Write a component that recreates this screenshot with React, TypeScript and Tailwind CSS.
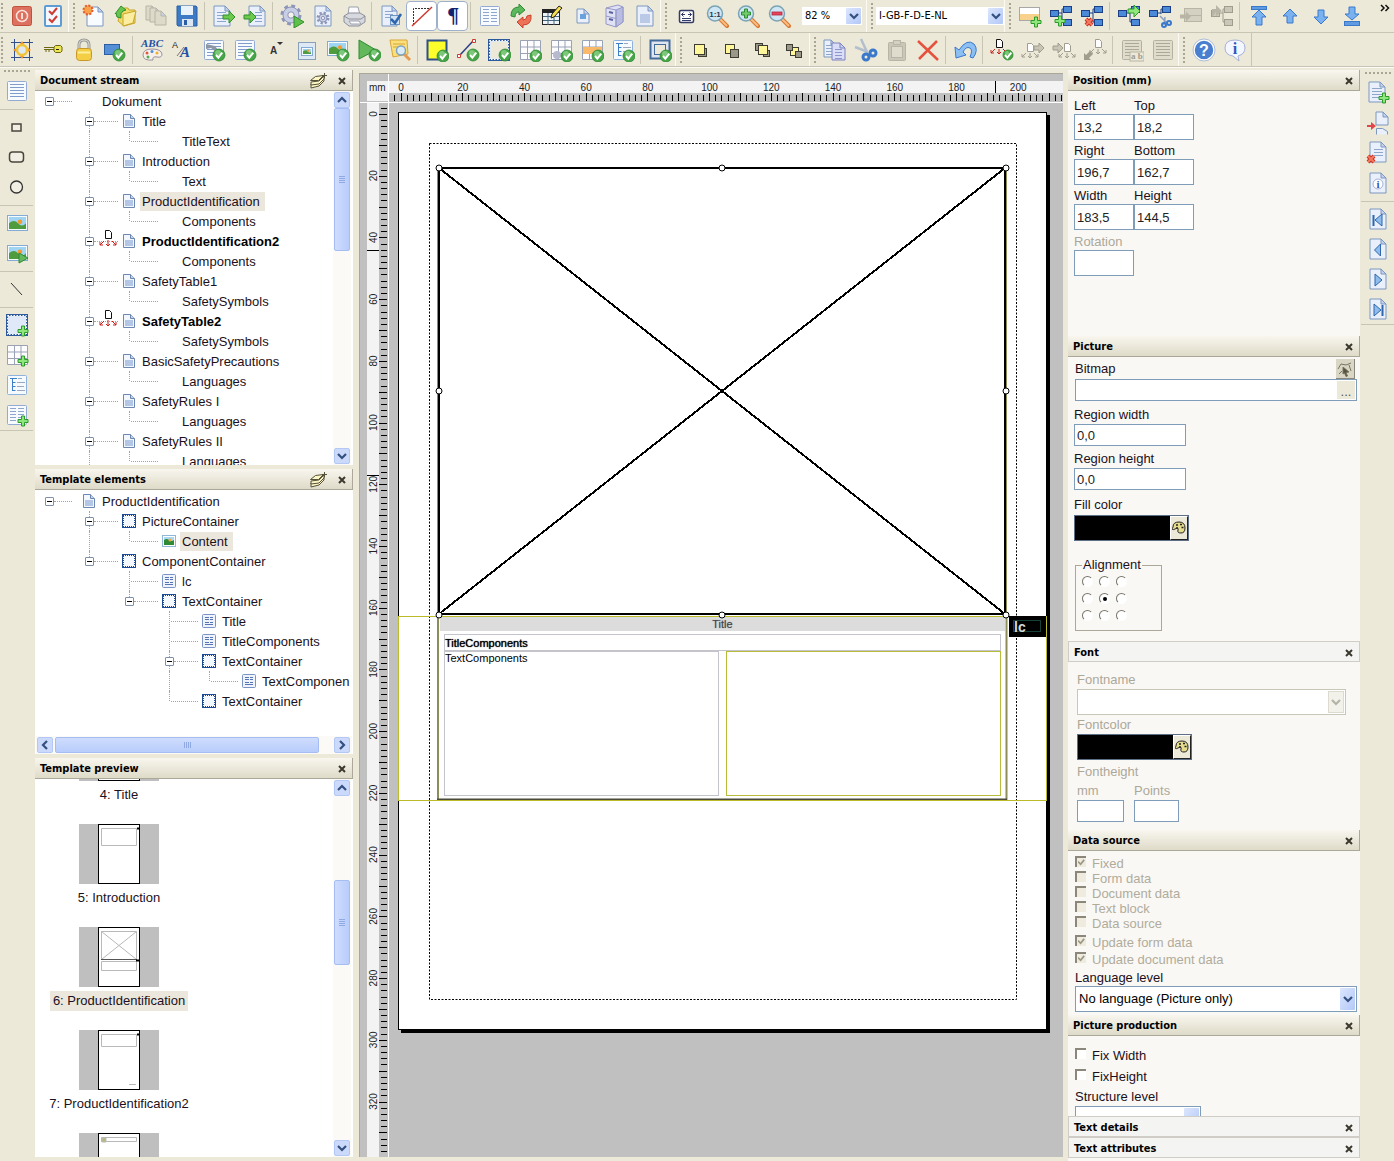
import React, { type ReactNode } from "react";

const UI = "font-['DejaVu_Sans_Condensed','Noto_Sans',sans-serif]";

/* ---------- icon building blocks ---------- */

const Pg = ({ x = 4, y = 2, w = 16, h = 20, fill = "#eaf0fb", stroke = "#7d97bf" }) => (
  <>
    <path d={`M${x} ${y}h${w - 5}l5 5v${h - 5}h${-w}z`} fill={fill} stroke={stroke} />
    <path d={`M${x + w - 5} ${y}v5h5z`} fill="#c3d3ee" stroke={stroke} />
  </>
);
const Lines = ({ x = 7, y = 9, w = 10, n = 4, c = "#8ea6cc", gap = 3 }) => (
  <>
    {Array.from({ length: n }, (_, i) => (
      <path key={i} d={`M${x} ${y + i * gap + 0.5}h${w}`} stroke={c} />
    ))}
  </>
);
const Chk = ({ x = 17, y = 17, r = 6 }) => (
  <>
    <circle cx={x} cy={y} r={r} fill="#46a546" stroke="#2f8a35" strokeWidth=".8" />
    <circle cx={x - 1} cy={y - 2} r={r - 3} fill="#7cc77a" />
    <path d={`M${x - 3} ${y}l2.300 2.600 4-5`} stroke="#fff" strokeWidth="2" fill="none" />
  </>
);
const Plus = ({ x = 18, y = 18 }) => (
  <path
    d={`M${x - 1.5} ${y - 5}h3v3.500h3.500v3h-3.500v3.500h-3v-3.500h-3.500v-3h3.500z`}
    fill="#8ee67c"
    stroke="#2a9a2a"
  />
);
const RedX = ({ x = 7, y = 18, s = 3 }) => (
  <>
    <path d={`M${x - s} ${y - s}l${2 * s} ${2 * s}m0 ${-2 * s}l${-2 * s} ${2 * s}`} stroke="#c9301c" strokeWidth="4" />
    <path d={`M${x - s} ${y - s}l${2 * s} ${2 * s}m0 ${-2 * s}l${-2 * s} ${2 * s}`} stroke="#f47a64" strokeWidth="2" />
  </>
);
const Arrow = ({ x = 12, y = 12, c = "#6cc94c", s = "#2f8f2b" }) => (
  <path d={`M${x} ${y - 2}h6v-4l6 6-6 6v-4h-6z`} fill={c} stroke={s} />
);
const Table = () => (
  <>
    <path d="M2.500 2.500h20v19h-20z" fill="#fdfdff" />
    <path d="M2.500 2.500h20v19h-20zM9.500 2.500v19M16 2.500v19M2.500 9h20M2.500 15.500h20" stroke="#9aa3b5" fill="none" />
  </>
);
const Photo = ({ x = 2, y = 4, w = 20, h = 15 }) => (
  <>
    <rect x={x + 0.5} y={y + 0.5} width={w} height={h} fill="#f6fbff" stroke="#83abd4" />
    <rect x={x + 2} y={y + 2} width={w - 3} height={h - 3} fill="#9fd4f2" />
    <path
      d={`M${x + 2} ${y + h * 0.55}q${w * 0.25} ${-h * 0.3} ${w * 0.45} 0t${w - 3 - w * 0.45} 0v${h * 0.45 - 1}h${-(w - 3)}z`}
      fill="#4f9c3e"
    />
    <circle cx={x + w * 0.65} cy={y + h * 0.45} r={h * 0.15} fill="#f59a2c" />
  </>
);
const Lens = ({ children }: { children?: ReactNode }) => (
  <>
    <path d="M15 15l7 7" stroke="#d9762e" strokeWidth="4" strokeLinecap="round" />
    <path d="M15.500 15.500l6 6" stroke="#f8bd85" strokeWidth="2" strokeLinecap="round" />
    <circle cx="10" cy="9.500" r="7.500" fill="#cfe6f4" stroke="#7aa3b5" strokeWidth="1.500" />
    {children}
  </>
);
const Gear = ({ x = 11, y = 10, r = 6 }) => (
  <>
    <circle cx={x} cy={y} r={r + 1} fill="none" stroke="#8d96b8" strokeWidth="3" strokeDasharray={`${(r + 1) * 0.42} ${(r + 1) * 0.365}`} />
    <circle cx={x} cy={y} r={r} fill="#c8cee6" stroke="#8d96b8" />
    <circle cx={x} cy={y} r={r * 0.4} fill="#f4f2ea" stroke="#8d96b8" />
  </>
);
const Box = ({ x = 0, y = 0, w = 8, h = 6, c = "#3f7fd0", s = "#1d3f86" }) => (
  <rect x={x + 0.5} y={y + 0.5} width={w} height={h} fill={c} stroke={s} />
);
const Nodes = ({ c = "#4a8ad8", s = "#1d3f86" }) => (
  <>
    <path d="M9 9h4M13 5v13M13 5h3M13 18h3" stroke={s} fill="none" />
    <Box x={1} y={6} c={c} s={s} />
    <Box x={14} y={2} c={c} s={s} />
    <Box x={14} y={15} c={c} s={s} />
  </>
);
const Fan = ({ x = 12, y = 2, c = "#111", a = "#c8201c" }) => (
  <>
    <path d={`M${x - 2.5} ${y + 0.5}h4l2 2v6h-6z`} fill="#fff" stroke={c} />
    <path
      d={`M${x - 4} ${y + 10}l-4 4m0-3v3h3M${x} ${y + 10}v5m-2-2l2 2 2-2M${x + 4} ${y + 10}l4 4m0-3v3h-3`}
      stroke={a}
      fill="none"
    />
  </>
);
const Sq = ({ x = 0, y = 0, s = 9, c = "#fff79a" }) => (
  <rect x={x + 0.5} y={y + 0.5} width={s} height={s} fill={c} stroke="#3c3c30" />
);
const Dashed = () => (
  <>
    <rect x="2" y="2" width="20" height="20" fill="#dfe9f8" stroke="#2c5a9c" strokeWidth="2" />
    <rect x="2.500" y="2.500" width="19" height="19" fill="none" stroke="#fff" strokeDasharray="1.500 1.500" />
  </>
);
const Sheet = ({ g = false }) => (
  <>
    <rect x="2.500" y="2.500" width="19" height="19" rx="1" fill={g ? "#e0dccc" : "#f7faff"} stroke={g ? "#b5b1a2" : "#93abd4"} />
    <Lines x={5} y={5} w={14} n={5} c={g ? "#aca899" : "#7f9ccb"} />
  </>
);
const TreeI = () => (
  <>
    <rect x="2.500" y="2.500" width="19" height="19" rx="1" fill="#f5faff" stroke="#8fb2dd" />
    <path d="M5 5.500h7M7.500 6v12M7.500 9.500h3M7.500 13.500h3M7.500 17.500h3" stroke="#3f7fc8" fill="none" />
    <path d="M12 9.500h8M12 13.500h7M12 17.500h8M13 5.500h4" stroke="#9aa7bd" />
  </>
);
const Columns = () => (
  <>
    <rect x="2.500" y="2.500" width="19" height="19" rx="1" fill="#f7faff" stroke="#93abd4" />
    <Lines x={5} y={5} w={6} n={5} />
    <Lines x={13} y={5} w={6} n={5} />
  </>
);

const G = "#b9b5a6";
const GS = "#a09c8e";

const icons: Record<string, ReactNode> = {
  Exit: (
    <>
      <rect x="2.500" y="2.500" width="19" height="19" rx="2" fill="#dd7160" stroke="#c2503e" />
      <circle cx="12" cy="12" r="5.500" fill="none" stroke="#fbe3dc" strokeWidth="1.500" />
      <path d="M12 9v6" stroke="#fff" strokeWidth="1.500" />
    </>
  ),
  Checklist: (
    <>
      <rect x="4" y="2" width="16" height="20" rx="1" fill="#f3f8ff" stroke="#5f9cd3" strokeWidth="2" />
      <path d="M8 7l3 3 5-6M8 15l3 3 5-6" stroke="#cf3a30" strokeWidth="2" fill="none" />
    </>
  ),
  New: (
    <>
      <Pg x={5} y={3} w={16} h={19} fill="#f8fbff" />
      <circle cx="6" cy="6" r="4.500" fill="#f7a24a" stroke="#e5572a" strokeDasharray="2 1.500" strokeWidth="2" />
    </>
  ),
  Open: (
    <>
      <path d="M8 7l3-3h4l1 2h6v13l-11 3-6-5z" fill="#f3dc6a" stroke="#c9a52b" />
      <path d="M10 10l13-3-3 12-10 3z" fill="#fbeea0" stroke="#c9a52b" />
      <path d="M2 10l6-8 5 4-3 1q-3 2-2 7l-4-1-1-4z" fill="#66c54e" stroke="#2f8f2b" />
    </>
  ),
  Pages: (
    <>
      <Pg x={2} y={2} w={11} h={14} fill="#dedaca" stroke={G} />
      <Pg x={6} y={4} w={11} h={14} fill="#dedaca" stroke={G} />
      <Pg x={11} y={7} w={11} h={14} fill="#dedaca" stroke={G} />
    </>
  ),
  Save: (
    <>
      <path d="M2 2h19l1 1v19H3l-1-1z" fill="#3d7ac6" stroke="#2b5ea5" />
      <rect x="6" y="2" width="12" height="9" fill="#e9f1fb" />
      <rect x="7" y="15" width="11" height="7" fill="#dce6f3" />
      <rect x="9" y="16" width="3" height="5" fill="#2b5ea5" />
    </>
  ),
  Export: (
    <>
      <Pg x={2} y={2} w={16} h={20} />
      <Lines x={5} y={8} w={9} n={4} />
      <Arrow x={11} y={13} />
    </>
  ),
  Import: (
    <>
      <Pg x={6} y={2} w={16} h={20} />
      <Lines x={12} y={8} w={7} n={4} />
      <Arrow x={1} y={13} />
    </>
  ),
  Process: (
    <>
      <Gear x={11} y={11} r={8} />
      <path d="M14 12l10 6-10 6z" fill="#5fc04c" stroke="#2f8f2b" />
    </>
  ),
  "Document settings": (
    <>
      <Pg x={4} y={2} w={16} h={20} />
      <Gear x={12} y={14} r={4} />
    </>
  ),
  Print: (
    <>
      <path d="M7 3h9l2 8H6z" fill="#fbfbfd" stroke="#9aa0ac" />
      <path d="M2 12l5-3h11l5 3v6l-6 4H7l-5-4z" fill="#d8d9de" stroke="#8d9098" />
      <path d="M2 12l5 3h12l4-3" stroke="#8d9098" fill="none" />
      <path d="M7 17h10l2 3H9z" fill="#fff" stroke="#9aa0ac" />
    </>
  ),
  "Check document": (
    <>
      <Pg x={3} y={2} w={15} h={20} />
      <Lines x={6} y={7} w={8} n={3} />
      <rect x="11.500" y="11.500" width="9" height="9" fill="#d3e3f5" stroke="#6d93c2" />
      <path d="M12 15l4 4 6-9" stroke="#2e66ac" strokeWidth="2.500" fill="none" />
    </>
  ),
  Guides: (
    <>
      <path d="M3.500 21V4.500H20" stroke="#333" strokeDasharray="2 1" fill="none" />
      <path d="M2 22L22 3" stroke="#cf3a30" strokeWidth="1.500" />
    </>
  ),
  "Control characters": (
    <text x="12" y="19" textAnchor="middle" fontFamily="DejaVu Serif, serif" fontWeight="bold" fontSize="20" fill="#15236e">
      ¶
    </text>
  ),
  "List view": <Columns />,
  Refresh: (
    <>
      <path d="M2 12q0-9 8-9V0l6 6-6 5V8q-4 0-4 5z" fill="#5cb85c" stroke="#2f8a35" />
      <path d="M22 11q1 10-8 10v3l-6-6 6-5v3q4 0 4-4z" fill="#ee7257" stroke="#c9402b" />
    </>
  ),
  "Edit table": (
    <>
      <rect x="2.500" y="5.500" width="17" height="15" fill="#eef3f8" stroke="#222" />
      <path d="M2 7.500h18" stroke="#222" strokeWidth="3" />
      <path d="M8 9v12M14 9v12M3 12.500h16M3 16.500h16" stroke="#47687c" />
      <path d="M11 14l1-4 7-8 3 2-8 9z" fill="#f8df4e" stroke="#222" />
    </>
  ),
  "Small document": (
    <>
      <Pg x={6} y={5} w={12} h={14} />
      <rect x="9" y="10" width="6" height="5" fill="#6aa2de" />
    </>
  ),
  Archive: (
    <>
      <path d="M4 4l12-3 5 2v15l-7 5-10-3z" fill="#e0e1f4" stroke="#9599c8" />
      <path d="M14 6l7-3v15l-7 5z" fill="#b9bce0" stroke="#9599c8" />
      <path d="M4 4l10 2v17M4 12l10 2.500" stroke="#9599c8" fill="none" />
      <path d="M7 8l4 1M7 15l4 1" stroke="#5b60a0" strokeWidth="2" />
    </>
  ),
  Document: (
    <>
      <Pg x={4} y={2} w={16} h={20} />
      <rect x="7" y="10" width="10" height="9" fill="#b9c9e6" />
    </>
  ),
  "Fit width": (
    <>
      <rect x="5.500" y="6.500" width="14" height="12" rx="1.500" fill="#fff" stroke="#333a66" strokeWidth="1.500" />
      <path d="M11 10.500H7.500l2-2m-2 2l2 2M14 10.500h3.500l-2-2m2 2l-2 2M8 14.500h9M8 16.500h9" stroke="#333a66" fill="none" />
    </>
  ),
  "Actual size": (
    <Lens>
      <text x="10" y="12.500" textAnchor="middle" fontFamily="Liberation Sans, sans-serif" fontWeight="bold" fontSize="8" fill="#1b3c55">
        1:1
      </text>
    </Lens>
  ),
  "Zoom in": (
    <Lens>
      <path d="M8.500 5h3v3h3v3h-3v3h-3v-3h-3V8h3z" fill="#6fca6a" stroke="#2f8a35" />
    </Lens>
  ),
  "Zoom out": (
    <Lens>
      <rect x="5" y="8" width="10" height="3" fill="#e5455c" stroke="#b5283c" strokeWidth=".8" />
    </Lens>
  ),
  "Add row": (
    <>
      <rect x="1.500" y="3.500" width="20" height="13" fill="#fff" stroke="#a8a8a8" />
      <rect x="2" y="10" width="19" height="6" fill="#f8d28c" />
      <Plus x={18} y={18} />
    </>
  ),
  "Add node": (
    <>
      <Nodes />
      <Plus x={11} y={17} />
    </>
  ),
  "Delete node": (
    <>
      <Nodes />
      <RedX x={9} y={18} />
    </>
  ),
  "Expand node": (
    <>
      <Nodes />
      <Arrow x={11} y={7} c="#8ee67c" s="#2a9a2a" />
    </>
  ),
  "Cut node": (
    <>
      <path d="M9 9h4M13 5h3M13 5v5" stroke="#1d3f86" fill="none" />
      <Box x={1} y={6} c="#4a8ad8" />
      <Box x={14} y={2} c="#4a8ad8" />
      <path d="M12 12l8 8M17 13l-1 8" stroke="#8a9bbd" strokeWidth="1.500" />
      <circle cx="16" cy="21" r="2" fill="none" stroke="#3a78cc" strokeWidth="2" />
      <circle cx="21" cy="19" r="2" fill="none" stroke="#3a78cc" strokeWidth="2" />
    </>
  ),
  "Insert row": (
    <>
      <rect x="5.500" y="4.500" width="17" height="13" fill="#d5d1c2" stroke={G} />
      <path d="M6 11.500h16" stroke={G} />
      <path d="M1 10.500h6v-3l5 5-5 5v-3H1z" fill={G} />
    </>
  ),
  "Insert node": (
    <>
      <Nodes c="#cbc7b8" s={GS} />
      <path d="M2 13V5h4V1l6 6-6 5V8" fill={G} />
    </>
  ),
  "Move to top": (
    <>
      <rect x="4.500" y="2.500" width="15" height="3" fill="#5e9be0" stroke="#3a78cc" />
      <path d="M12 6l7 7h-4v8H9v-8H5z" fill="#79b2ee" stroke="#3a78cc" />
    </>
  ),
  "Move up": <path d="M12 5l7 7h-4v7H9v-7H5z" fill="#79b2ee" stroke="#3a78cc" />,
  "Move down": <path d="M12 20l-7-7h4V6h6v7h4z" fill="#79b2ee" stroke="#3a78cc" />,
  "Move to bottom": (
    <>
      <path d="M12 16L5 10h4V3h6v7h4z" fill="#79b2ee" stroke="#3a78cc" />
      <rect x="4.500" y="17.500" width="15" height="4" fill="#5e9be0" stroke="#3a78cc" />
    </>
  ),
  "Anchor frame": (
    <>
      <path d="M4.500 1v22M19.500 1v22M1 4.500h22M1 19.500h22" stroke="#33508f" />
      <circle cx="12" cy="12" r="5" fill="#dfe7ef" stroke="#f0c236" strokeWidth="2.500" />
      <path d="M12 3l2 3h-4zM12 21l2-3h-4zM3 12l3-2v4zM21 12l-3-2v4z" fill="#f39a2c" />
    </>
  ),
  Key: (
    <>
      <path d="M3 9.500h11M3 11.500h11M5 12v2M8 12v2" stroke="#6c6512" />
      <path d="M14.500 7.500h5l1.500 1.500v4l-1.500 1.500h-5L13 13V9z" fill="#ece452" stroke="#6c6512" />
      <path d="M15 11.500h3" stroke="#222" />
    </>
  ),
  Lock: (
    <>
      <path d="M7 11V7q0-5 5-5t5 5v4" fill="none" stroke="#9b9b96" strokeWidth="3" />
      <path d="M7 11V7q0-5 5-5t5 5v4" fill="none" stroke="#dcdcd8" />
      <rect x="4.500" y="10.500" width="15" height="12" rx="3" fill="#f4cf45" stroke="#c8982a" />
      <path d="M6 14.500h12" stroke="#fcefa0" strokeWidth="2" />
    </>
  ),
  "Accept shape": (
    <>
      <rect x="1.500" y="6.500" width="15" height="10" fill="#5590d6" stroke="#2b5ea5" />
      <Chk x={16} y={17} />
    </>
  ),
  "Spelling colours": (
    <>
      <text x="12" y="9" textAnchor="middle" fontFamily="Liberation Serif, serif" fontWeight="bold" fontStyle="italic" fontSize="11" fill="#2350a5">
        ABC
      </text>
      <path d="M3 17q0-6 9-6t10 5q0 4-5 3t-4 3q-10 1-10-5z" fill="#f7f0ea" stroke="#9a8f9f" />
      <circle cx="7" cy="15" r="1.500" fill="#e05a3c" />
      <circle cx="12" cy="13.500" r="1.500" fill="#4e8edc" />
      <circle cx="17" cy="15" r="1.500" fill="#f0b030" />
      <circle cx="8" cy="19" r="1.500" fill="#4fae4f" />
    </>
  ),
  "Font style": (
    <>
      <text x="1" y="10" fontFamily="Liberation Sans, sans-serif" fontSize="9" fill="#222">
        A
      </text>
      <path d="M6 18L13 9" stroke="#777" />
      <text x="9" y="19" fontFamily="Liberation Serif, serif" fontStyle="italic" fontWeight="bold" fontSize="15" fill="#2350a5">
        A
      </text>
    </>
  ),
  "Accept edit": (
    <>
      <Sheet />
      <path d="M4 6l9 2 4 5-3 1-5-4-5 1z" fill="#8c96a5" />
      <Chk x={17} y={17} />
    </>
  ),
  "Accept text": (
    <>
      <Sheet />
      <Chk x={17} y={17} />
    </>
  ),
  "Shrink font": (
    <>
      <text x="6" y="16" fontFamily="Liberation Sans, sans-serif" fontWeight="bold" fontSize="10" fill="#333">
        A
      </text>
      <path d="M13 4h6l-3 3z" fill="#333" />
    </>
  ),
  "Picture frame": (
    <>
      <rect x="3.500" y="4.500" width="17" height="17" fill="#dfe9f6" stroke="#8aa0b8" />
      <Photo x={6} y={9} w={11} h={8} />
    </>
  ),
  "Accept picture": (
    <>
      <Photo x={1} y={3} w={20} h={14} />
      <Chk x={17} y={17} />
    </>
  ),
  "Accept run": (
    <>
      <path d="M2 2l17 10L2 21z" fill="#62b85b" stroke="#2f8a35" />
      <Chk x={18} y={17} />
    </>
  ),
  "Search note": (
    <>
      <path d="M2 2h17l1 14-15 3z" fill="#fbdf7a" stroke="#d9a53a" />
      <path d="M5 6h12M5 9h6" stroke="#d9a53a" />
      <path d="M16 16l6 6" stroke="#e59a52" strokeWidth="3" />
      <circle cx="13" cy="12.500" r="4.500" fill="#dcecf7" stroke="#7aa3c5" strokeWidth="1.500" />
    </>
  ),
  "Accept fill": (
    <>
      <rect x="2.500" y="2.500" width="19" height="19" fill="#fdfd2c" stroke="#2c4f86" strokeWidth="2" />
      <Chk x={18} y={18} />
    </>
  ),
  "Accept line": (
    <>
      <path d="M4 17L17 3" stroke="#2c3f86" strokeWidth="1.500" />
      <path d="M1.500 16.500h3v3h-3zM16.500 1.500h3v3h-3z" fill="#fff" stroke="#cf3a30" />
      <Chk x={17} y={17} />
    </>
  ),
  "Accept container": (
    <>
      <Dashed />
      <rect x="4" y="4" width="16" height="16" fill="#ece9d8" />
      <Chk x={18} y={17} />
    </>
  ),
  "Accept table": (
    <>
      <Table />
      <Chk x={18} y={18} />
    </>
  ),
  "Accept cell": (
    <>
      <Table />
      <circle cx="8" cy="17" r="4" fill="#b7b9cf" />
      <Chk x={18} y={18} />
    </>
  ),
  "Accept row": (
    <>
      <Table />
      <rect x="3" y="9" width="19" height="7" fill="#f9b968" />
      <Chk x={18} y={18} />
    </>
  ),
  "Accept structure": (
    <>
      <TreeI />
      <Chk x={18} y={18} />
    </>
  ),
  "Accept border": (
    <>
      <rect x="2.500" y="2.500" width="19" height="18" fill="#dfe5ee" stroke="#456a9c" strokeWidth="2" />
      <rect x="6.500" y="6.500" width="11" height="10" fill="#ece9d8" stroke="#456a9c" />
      <Chk x={18} y={18} />
    </>
  ),
  "Bring to front": (
    <>
      <Sq x={9} y={10} s={8} c="#9b988a" />
      <Sq x={5} y={6} s={10} />
    </>
  ),
  "Send to back": (
    <>
      <Sq x={5} y={6} />
      <Sq x={10} y={11} s={8} c="#9b988a" />
    </>
  ),
  "Bring forward": (
    <>
      <Sq x={4} y={5} s={7} c="#9b988a" />
      <Sq x={12} y={12} s={6} c="#9b988a" />
      <Sq x={7} y={7} s={9} />
    </>
  ),
  "Send backward": (
    <>
      <Sq x={8} y={9} s={8} />
      <Sq x={4} y={6} s={6} c="#9b988a" />
      <Sq x={13} y={13} s={6} c="#9b988a" />
    </>
  ),
  Copy: (
    <>
      <Pg x={1} y={2} w={12} h={17} />
      <Lines x={3} y={7} w={7} n={4} />
      <Pg x={9} y={5} w={13} h={17} fill="#d9ddf6" stroke="#7c82c0" />
      <Lines x={12} y={11} w={7} n={4} c="#8e94cc" />
    </>
  ),
  Cut: (
    <>
      <path d="M7 1l6 13M1 9l13 5" stroke="#b4bfce" strokeWidth="2.500" />
      <circle cx="12" cy="19" r="3" fill="none" stroke="#3a78cc" strokeWidth="3" />
      <circle cx="19" cy="15" r="3" fill="none" stroke="#3a78cc" strokeWidth="3" />
    </>
  ),
  Paste: (
    <>
      <rect x="3.500" y="4.500" width="17" height="18" rx="1" fill="#cbc7b8" stroke={G} />
      <rect x="6.500" y="8.500" width="11" height="11" fill="#dfdccd" stroke={G} />
      <rect x="8.500" y="2.500" width="7" height="4" fill="#d5d1c2" stroke={G} />
    </>
  ),
  Delete: <path d="M2 3l20 19M21 3L3 21" stroke="#e5533f" strokeWidth="2.500" fill="none" />,
  Undo: (
    <path
      d="M2 9l1 11 10-3-3-3q3-6 7-4 3 2 0 9l3 1q6-8 1-14-7-6-15 6z"
      fill="#8cc0f2"
      stroke="#3a78cc"
      strokeLinejoin="round"
    />
  ),
  "Accept page flow": (
    <>
      <Fan x={9} y={1} />
      <Chk x={18} y={17} r={5} />
    </>
  ),
  "Flow next": (
    <>
      <Fan x={9} y={5} c={GS} a={GS} />
      <path d="M13 8h5V5l5 5-5 5v-3h-5z" fill="#c9c5b6" stroke={GS} />
    </>
  ),
  "Flow insert": (
    <>
      <Fan x={15} y={5} c={GS} a={GS} />
      <path d="M1 8h5V5l5 5-5 5v-3H1z" fill="#c9c5b6" stroke={GS} />
    </>
  ),
  "Flow back": (
    <>
      <Fan x={15} y={1} c={GS} a={GS} />
      <path d="M1 22v-7l2 2 4-4 3 3-4 4 2 2z" fill={GS} />
    </>
  ),
  "Text case": (
    <>
      <Sheet g />
      <rect x="10" y="14" width="14" height="9" fill="#ece9d8" stroke={G} />
      <text x="11" y="21" fontFamily="Liberation Serif, serif" fontWeight="bold" fontSize="9" fill={GS}>
        a b
      </text>
    </>
  ),
  "Text block": <Sheet g />,
  Help: (
    <>
      <circle cx="12" cy="12" r="10" fill="#4a7fcf" stroke="#fff" strokeWidth="1.500" />
      <circle cx="12" cy="12" r="11" fill="none" stroke="#8fa8d6" strokeWidth=".7" />
      <text x="12" y="18" textAnchor="middle" fontFamily="Liberation Sans, sans-serif" fontWeight="bold" fontSize="16" fill="#fff">
        ?
      </text>
    </>
  ),
  About: (
    <>
      <path d="M12 2q10 0 10 8 0 6-7 8l1 5-6-5Q2 17 2 10q0-8 10-8z" fill="#f4f7ff" stroke="#a4b1d9" />
      <text x="12" y="16" textAnchor="middle" fontFamily="Liberation Serif, serif" fontWeight="bold" fontSize="16" fill="#3057c0">
        i
      </text>
    </>
  ),
  "Text element": <Sheet />,
  Rectangle: <rect x="7" y="9" width="9" height="7" fill="#f1efe4" stroke="#4a463c" strokeWidth="1.500" />,
  "Rounded rectangle": <rect x="4.500" y="7" width="14" height="10" rx="3" fill="#f1efe4" stroke="#4a463c" strokeWidth="1.500" />,
  Ellipse: <circle cx="11.500" cy="12" r="6" fill="#f1efe4" stroke="#333" strokeWidth="1.300" />,
  Picture: <Photo />,
  "Picture run": (
    <>
      <Photo />
      <path d="M14 12l9 5-9 5z" fill="#62b85b" stroke="#2f8a35" />
    </>
  ),
  Line: <path d="M6 6l11 12" stroke="#333" />,
  "Add container": (
    <>
      <Dashed />
      <Plus />
    </>
  ),
  "Add table": (
    <>
      <Table />
      <Plus />
    </>
  ),
  Structure: <TreeI />,
  "Add columns": (
    <>
      <Columns />
      <Plus />
    </>
  ),
  "Add page": (
    <>
      <Pg x={3} y={1} w={16} h={20} />
      <Lines x={6} y={7} w={10} n={4} />
      <Plus x={18} y={17} />
    </>
  ),
  "Insert page break": (
    <>
      <Pg x={10} y={1} w={12} h={13} />
      <path d="M10.500 23.500v-6h6l5 3v3" fill="#eaf0fb" stroke="#7d97bf" />
      <path d="M1 14h4v-3l5 4-5 4v-3H1z" fill="#e0454a" />
    </>
  ),
  "Delete page": (
    <>
      <Pg x={4} y={1} w={16} h={20} />
      <Lines x={8} y={8} w={9} n={3} />
      <RedX x={5} y={18} />
    </>
  ),
  "Page info": (
    <>
      <Pg x={4} y={2} w={16} h={20} />
      <circle cx="12" cy="13" r="5" fill="#fff" stroke="#a4b1d9" />
      <text x="12" y="17" textAnchor="middle" fontFamily="Liberation Serif, serif" fontWeight="bold" fontSize="11" fill="#3057c0">
        i
      </text>
    </>
  ),
  "First page": (
    <>
      <Pg x={4} y={2} w={16} h={20} />
      <path d="M7.500 8v11" stroke="#2f66ac" strokeWidth="2" />
      <path d="M16 7v12l-7-6z" fill="#8ebcec" stroke="#2f66ac" />
    </>
  ),
  "Previous page": (
    <>
      <Pg x={4} y={2} w={16} h={20} />
      <path d="M14.500 7v12l-6-6z" fill="#8ebcec" stroke="#2f66ac" />
    </>
  ),
  "Next page": (
    <>
      <Pg x={4} y={2} w={16} h={20} />
      <path d="M9 7v12l7-6z" fill="#8ebcec" stroke="#2f66ac" />
    </>
  ),
  "Last page": (
    <>
      <Pg x={4} y={2} w={16} h={20} />
      <path d="M8 7v12l7-6z" fill="#8ebcec" stroke="#2f66ac" />
      <path d="M16.500 8v11" stroke="#2f66ac" strokeWidth="2" />
    </>
  ),
};

const Svg = ({ children }: { children: ReactNode }) => (
  <svg viewBox="0 0 24 24" className="h-6 w-6 flex-none" fill="none" aria-hidden="true">
    {children}
  </svg>
);

/* ---------- toolbars ---------- */

const Tool = ({ name, pressed = false, vertical = false }: { name: string; pressed?: boolean; vertical?: boolean }) => (
  <button
    type="button"
    aria-label={name}
    className={`flex flex-none items-center justify-center ${vertical ? "h-[30px] w-full" : "h-[30px] w-[31px]"} ${
      pressed ? "rounded-sm border border-[#9db0cc] bg-white" : ""
    }`}
  >
    <Svg>{icons[name]}</Svg>
  </button>
);
const Sep = () => <div className="mr-[3px] ml-0.5 h-7 w-px flex-none bg-[#c9c5b4]" />;
const Grip = () => (
  <div className="flex h-full w-2.5 flex-none items-center border-l border-[#fbfaf5] pl-1">
    <div className="h-[26px] border-l-2 border-dotted border-[#a9a593]" />
  </div>
);
const VSep = () => (
  <div className="flex h-1.5 w-full flex-none items-center">
    <span className="h-px w-full bg-[#c9c5b4]" />
  </div>
);

const Tools = ({ names }: { names: string[] }) => (
  <>
    {names.map((n) => (
      <Tool key={n} name={n} pressed={n === "Guides" || n === "Control characters"} />
    ))}
  </>
);

const Chevron = ({ dir = "down", muted = false }: { dir?: "down" | "up" | "left" | "right"; muted?: boolean }) => (
  <svg viewBox="0 0 10 10" className="h-2.5 w-2.5" fill="none" aria-hidden="true">
    <path
      d={{ down: "M1 3l4 4 4-4", up: "M1 7l4-4 4 4", left: "M7 1L3 5l4 4", right: "M3 1l4 4-4 4" }[dir]}
      stroke={muted ? "#b5b3a8" : "#33507f"}
      strokeWidth="2.200"
    />
  </svg>
);

const Select = ({
  id,
  label,
  value,
  className,
  disabled = false,
}: {
  id: string;
  label?: string;
  value: string;
  className: string;
  disabled?: boolean;
}) => (
  <div className={`relative flex-none bg-white ${className}`}>
    <select
      id={id}
      aria-label={label}
      disabled={disabled}
      defaultValue={value}
      className="block h-full w-full appearance-none bg-transparent pr-5 pl-[3px] text-black outline-none"
    >
      <option value={value}>{value}</option>
    </select>
    <span
      className={`pointer-events-none absolute inset-y-px right-px flex items-center justify-center ${
        disabled ? "w-4 border border-[#dddbd0] bg-[#f2f1ea]" : "w-[15px] rounded-[1px] bg-linear-to-br from-[#dce6fd] to-[#b3c8f8]"
      }`}
    >
      <Chevron muted={disabled} />
    </span>
  </div>
);

const TopBars = () => (
  <header>
    <div role="toolbar" aria-label="Standard" className="flex h-[33px] items-center overflow-hidden border-b border-[#c9c5b4]">
      <div className="-ml-1 flex h-full flex-none">
        <Grip />
      </div>
      <Tools names={["Exit", "Checklist"]} />
      <Grip />
      <Tools names={["New", "Open", "Pages", "Save"]} />
      <Sep />
      <Tools names={["Export", "Import"]} />
      <Sep />
      <Tools names={["Process", "Document settings", "Print"]} />
      <Sep />
      <Tools names={["Check document", "Guides", "Control characters"]} />
      <Sep />
      <Tools names={["List view", "Refresh", "Edit table", "Small document", "Archive", "Document"]} />
      <Grip />
      <Tools names={["Fit width", "Actual size", "Zoom in", "Zoom out"]} />
      <Select id="zoom" label="Zoom" value="82 %" className={`mr-1 ml-2 h-[18px] w-[60px] text-[11px] ${UI}`} />
      <Grip />
      <Select id="langs" label="Languages" value="I-GB-F-D-E-NL" className={`h-[18px] w-[128px] text-[11px] ${UI}`} />
      <Grip />
      <Tools names={["Add row", "Add node", "Delete node"]} />
      <Sep />
      <Tools names={["Expand node", "Cut node", "Insert row", "Insert node"]} />
      <Sep />
      <Tools names={["Move to top", "Move up", "Move down", "Move to bottom"]} />
      <button type="button" aria-label="More tools" className="mr-0.5 ml-auto flex h-full w-3 items-start pt-1">
        <svg viewBox="0 0 10 8" className="h-2 w-2.5" fill="none" stroke="#111" strokeWidth="1.500" aria-hidden="true">
          <path d="M1 1l3 3-3 3M5.500 1l3 3-3 3" />
        </svg>
      </button>
    </div>
    <div role="toolbar" aria-label="Elements" className="flex h-[34px] items-center overflow-hidden border-b border-[#c9c5b4]">
      <div className="-ml-1 flex h-full flex-none">
        <Grip />
      </div>
      <Tools names={["Anchor frame", "Key", "Lock", "Accept shape"]} />
      <Sep />
      <Tools
        names={[
          "Spelling colours",
          "Font style",
          "Accept edit",
          "Accept text",
          "Shrink font",
          "Picture frame",
          "Accept picture",
          "Accept run",
          "Search note",
        ]}
      />
      <Sep />
      <Tools
        names={["Accept fill", "Accept line", "Accept container", "Accept table", "Accept cell", "Accept row", "Accept structure"]}
      />
      <Sep />
      <Tools names={["Accept border"]} />
      <Grip />
      <Tools names={["Bring to front", "Send to back", "Bring forward", "Send backward"]} />
      <Grip />
      <Tools names={["Copy", "Cut", "Paste", "Delete"]} />
      <Sep />
      <Tools names={["Undo"]} />
      <Sep />
      <Tools names={["Accept page flow", "Flow next", "Flow insert", "Flow back"]} />
      <Sep />
      <Tools names={["Text case", "Text block"]} />
      <Grip />
      <Tools names={["Help", "About"]} />
      <div className="h-full w-0.5 border-r border-[#c9c5b4]" />
    </div>
  </header>
);

const SideBar = ({ label, groups, className, inner }: { label: string; groups: string[][]; className: string; inner: string }) => (
  <div role="toolbar" aria-label={label} className={`flex flex-none flex-col ${className}`}>
    <div className={`flex flex-col items-center border-b border-[#c9c5b4] ${inner}`}>
      <div className="w-[26px] border-t-2 border-dotted border-[#a9a593]" />
      {groups.map((g, i) => (
        <React.Fragment key={i}>
          {i > 0 && <VSep />}
          {i === 0 && <span className="h-1 flex-none" />}
          {g.map((n) => (
            <Tool key={n} name={n} vertical />
          ))}
        </React.Fragment>
      ))}
    </div>
  </div>
);

/* ---------- panels ---------- */

const PanelHead = ({ title, stack = false, flat = false }: { title: string; stack?: boolean; flat?: boolean }) => (
  <div
    className={`flex h-[21px] flex-none items-center border-b px-[5px] pt-0.5 ${
      flat ? "border border-[#cfcdc6] bg-[#f4f4f3]" : "border-r border-[#aca899] bg-linear-to-b from-[#f8f6ee] to-[#dfdbc9]"
    }`}
  >
    <h2 className={`flex-1 text-[11px] leading-4 font-bold text-black ${UI}`}>{title}</h2>
    {stack && (
      <button type="button" aria-label={`${title} layers`} className="mr-2.5 h-4 w-[18px]">
        <svg viewBox="0 0 18 16" className="h-4 w-[18px]" fill="#fbf6c4" stroke="#55513a" aria-hidden="true">
          <path d="M2 11l8-1 5-5v3l-5 5-8 2z" />
          <path d="M2 9l8-1 5-5v3l-5 5-8 1z" />
          <path d="M1.500 7.500l5-4 8-1-5 5z" />
          <path d="M15.500 0v5M13 2.500h5" />
        </svg>
      </button>
    )}
    <button type="button" aria-label={`Close ${title}`} className="flex h-4 w-2.5 items-center justify-center">
      <svg viewBox="0 0 8 8" className="h-2 w-2" stroke="#3b382d" strokeWidth="2" aria-hidden="true">
        <path d="M1 1l6 6M7 1L1 7" />
      </svg>
    </button>
  </div>
);

const scrollBtn = "flex h-4 w-4 flex-none items-center justify-center rounded-[2px] border border-[#b4c8f6] bg-[#cbd9fb]";

const VScroll = ({ thumb }: { thumb: string }) => (
  <div className="flex w-[18px] flex-none flex-col items-center bg-[#fbfaf6] py-px">
    <button type="button" aria-label="Scroll up" className={scrollBtn}>
      <Chevron dir="up" />
    </button>
    <div className={`flex w-4 flex-none flex-col items-center justify-center gap-px rounded-[2px] border border-[#a5bdf2] bg-linear-to-r from-[#cfdcfd] to-[#b8cdfb] ${thumb}`}>
      {[0, 1, 2, 3].map((i) => (
        <span key={i} className="h-px w-1.5 bg-[#8fa9e3]" />
      ))}
    </div>
    <button type="button" aria-label="Scroll down" className={`mt-auto ${scrollBtn}`}>
      <Chevron />
    </button>
  </div>
);

/* ---------- trees ---------- */

type Row = {
  level: number;
  label: string;
  icon?: "page" | "frame" | "text" | "photo";
  toggle?: boolean;
  guides?: number[];
  last?: boolean;
  bold?: boolean;
  selected?: boolean;
};

const sec = (label: string, child: string, extra: Partial<Row> = {}): Row[] => [
  { level: 1, label, icon: "page", toggle: true, ...extra },
  { level: 2, label: child, guides: [1], last: true },
];

const documentRows: Row[] = [
  { level: 0, label: "Dokument", toggle: true, last: true },
  ...sec("Title", "TitleText"),
  ...sec("Introduction", "Text"),
  ...sec("ProductIdentification", "Components", { selected: true }),
  ...sec("ProductIdentification2", "Components", { bold: true }),
  ...sec("SafetyTable1", "SafetySymbols"),
  ...sec("SafetyTable2", "SafetySymbols", { bold: true }),
  ...sec("BasicSafetyPrecautions", "Languages"),
  ...sec("SafetyRules I", "Languages"),
  ...sec("SafetyRules II", "Languages"),
];

const elementRows: Row[] = [
  { level: 0, label: "ProductIdentification", icon: "page", toggle: true, last: true },
  { level: 1, label: "PictureContainer", icon: "frame", toggle: true },
  { level: 2, label: "Content", icon: "photo", guides: [1], last: true, selected: true },
  { level: 1, label: "ComponentContainer", icon: "frame", toggle: true, last: true },
  { level: 2, label: "lc", icon: "text" },
  { level: 2, label: "TextContainer", icon: "frame", toggle: true, last: true },
  { level: 3, label: "Title", icon: "text" },
  { level: 3, label: "TitleComponents", icon: "text" },
  { level: 3, label: "TextContainer", icon: "frame", toggle: true },
  { level: 4, label: "TextComponen", icon: "text", guides: [3], last: true },
  { level: 3, label: "TextContainer", icon: "frame", last: true },
];

const rowIcons = {
  page: (
    <svg viewBox="0 0 14 14" className="h-3.5 w-3.5" aria-hidden="true">
      <path d="M1.500.5h7l4 4v9h-11z" fill="#f2f6fd" stroke="#6d87b3" />
      <path d="M8.500.5v4h4" fill="#c3d3ee" stroke="#6d87b3" />
      <path d="M3 6h8v6H3z" fill="#b4c6e6" />
    </svg>
  ),
  frame: (
    <svg viewBox="0 0 14 14" className="h-3.5 w-3.5" aria-hidden="true" shapeRendering="crispEdges">
      <rect x="1" y="1" width="12" height="12" fill="#f4f9ff" stroke="#1c4b96" strokeWidth="2" />
      <rect x="1.500" y="1.500" width="11" height="11" fill="none" stroke="#fff" strokeDasharray="1 1" />
    </svg>
  ),
  text: (
    <svg viewBox="0 0 14 14" className="h-3.5 w-3.5" aria-hidden="true">
      <rect x=".5" y=".5" width="13" height="13" rx="1" fill="#eef3fc" stroke="#7b92c4" />
      <path d="M3 3.500h4M8 3.500h3M3 5.500h4M8 5.500h3M3 8.500h4M8 8.500h3M3 10.500h8" stroke="#5673b3" />
    </svg>
  ),
  photo: (
    <svg viewBox="0 0 14 14" className="h-3.5 w-3.5" aria-hidden="true">
      <rect x=".5" y="1.500" width="13" height="11" fill="#fff" stroke="#8fb7dc" />
      <rect x="2" y="3" width="10" height="4" fill="#a9d8f2" />
      <path d="M2 6q3-2 5 0t5 0v5H2z" fill="#2f8a35" />
      <circle cx="8" cy="6" r="1.500" fill="#f2a541" />
    </svg>
  ),
};

const dot = "border-[#a3a3a3] border-dotted";

const TreeRow = ({ row }: { row: Row }) => (
  <li className="flex h-5 flex-none items-center whitespace-nowrap">
    {Array.from({ length: row.level }, (_, l) => (
      <span key={l} className="flex h-full w-10 flex-none pl-[11px]">
        {row.guides?.includes(l) && <span className={`h-full border-l ${dot}`} />}
      </span>
    ))}
    <span className="relative flex h-full w-10 flex-none items-center pl-[7px]">
      {row.level > 0 && <span className={`absolute top-0 left-[11px] border-l ${dot} ${row.last ? "h-2.5" : "h-full"}`} />}
      {row.toggle ? (
        <button
          type="button"
          aria-label={`Collapse ${row.label}`}
          className="relative flex h-[9px] w-[9px] flex-none items-center justify-center rounded-[1px] border border-[#7f8fa8] bg-white"
        >
          <span className="h-px w-[5px] bg-black" />
        </button>
      ) : (
        <span className="w-1.5 flex-none" />
      )}
      <span className={`border-t ${dot} ${row.level === 0 ? "w-[18px]" : "flex-1"}`} />
      {row.bold && (
        <svg viewBox="0 0 18 18" className="absolute -top-px left-[21px] h-[18px] w-[18px]" aria-hidden="true">
          <path d="M6.500.5h4l2 2v6h-6z" fill="#fff" stroke="#111" />
          <path d="M5 11l-4 4m0-3v3h3M9 10v6m-2-2l2 2 2-2M13 11l4 4m0-3v3h-3" stroke="#c8201c" fill="none" />
        </svg>
      )}
    </span>
    <span className="flex w-[22px] flex-none justify-start pl-1">{row.icon && rowIcons[row.icon]}</span>
    <span
      className={`h-[19px] pl-0.5 leading-[19px] ${row.bold ? "font-bold text-black" : "text-[#1b1020]"} ${
        row.selected ? "bg-[#ebe7dc] pr-[5px]" : ""
      }`}
    >
      {row.label}
    </span>
  </li>
);

const Tree = ({ rows, label, className = "" }: { rows: Row[]; label: string; className?: string }) => (
  <ul aria-label={label} className={`flex min-w-0 flex-1 flex-col overflow-hidden pl-0.5 text-[13px] ${className}`}>
    {rows.map((r, i) => (
      <TreeRow key={i} row={r} />
    ))}
  </ul>
);

/* ---------- template preview ---------- */

const previews: { label?: string; art: ReactNode; selected?: boolean }[] = [
  { label: "4: Title", art: <path d="M3.500 4.500h35v14h-35z" /> },
  {
    label: "5: Introduction",
    art: (
      <>
        <path d="M3.500 4.500h35v17h-35z" />
        <path d="M39 4.500h2" stroke="#000" strokeWidth="2" />
      </>
    ),
  },
  {
    label: "6: ProductIdentification",
    selected: true,
    art: (
      <>
        <path d="M3.500 4.500h35v28h-35zl35 28M38.500 4.500l-35 28M3.500 34.500h35v9h-35z" />
        <path d="M3 32.500h36" stroke="#555" />
        <path d="M38 33.500h3" stroke="#000" strokeWidth="2" />
      </>
    ),
  },
  {
    label: "7: ProductIdentification2",
    art: (
      <>
        <path d="M3.500 4.500h35v12h-35zM31 54.500h7" />
        <path d="M39 4.500h2" stroke="#000" strokeWidth="2" />
      </>
    ),
  },
  {
    art: (
      <>
        <path d="M3.500 4.500h35v4h-35z" />
        <path d="M4 5h4v4H4z" fill="#b9b97a" />
      </>
    ),
  },
];

const Preview = () => (
  <div className="flex min-h-0 flex-1 overflow-hidden bg-white">
    <ul className="-mt-[58px] flex flex-1 flex-col items-start text-[13px]">
      {previews.map((p, i) => (
        <li key={i} className="flex h-[103px] w-[166px] flex-none flex-col items-center">
          <div className="flex h-[60px] w-20 flex-none justify-center bg-[#bfbfbf]">
            <svg viewBox="0 0 42 60" className="h-[60px] w-[42px]" fill="none" stroke="#b9b9b9" aria-hidden="true">
              <rect x=".5" y=".5" width="41" height="59" fill="#fff" stroke="#000" />
              {p.art}
            </svg>
          </div>
          {p.label && (
            <span className={`mt-1 h-5 px-[3px] leading-[19px] whitespace-nowrap text-[#1b1020] ${p.selected ? "bg-[#ebe7dc]" : ""}`}>
              {p.label}
            </span>
          )}
        </li>
      ))}
    </ul>
    <VScroll thumb="mt-[84px] h-[85px]" />
  </div>
);

/* ---------- drawing area ---------- */

const TICK = 6.172;
const labels = (max: number) => Array.from({ length: max / 20 + 1 }, (_, i) => i * 20);

const TopRuler = () => (
  <div className="min-w-0 overflow-hidden border-b border-white bg-[#c0c0c0] pt-[7px]">
    <svg className="block h-5 w-full" aria-hidden="true">
      <rect width="100%" height="12" fill="#f3f3f3" />
      {Array.from({ length: 130 }, (_, i) => {
        const n = i - 1;
        return <rect key={i} x={Math.round(11.5 + n * TICK)} y={n % 5 === 0 ? 12 : 14} width="1" height={n % 5 === 0 ? 8 : 6} fill="#000" />;
      })}
      <rect x="606" y="0" width="1" height="12" fill="#000" />
      {labels(200).map((v) => (
        <text
          key={v}
          x={12 + (v / 2) * TICK}
          y="10"
          textAnchor="middle"
          fontFamily="Liberation Sans, sans-serif"
          fontSize="10"
          fill="#222"
        >
          {v}
        </text>
      ))}
    </svg>
  </div>
);

const SideRuler = () => (
  <div className="min-h-0 overflow-hidden border-r border-white bg-[#c0c0c0] pl-[7px]">
    <svg className="block h-full w-5" aria-hidden="true">
      <rect width="12" height="100%" fill="#f3f3f3" />
      {Array.from({ length: 180 }, (_, i) => {
        const n = i - 1;
        return <rect key={i} y={Math.round(11 + n * TICK)} x={n % 5 === 0 ? 12 : 14} height="1" width={n % 5 === 0 ? 8 : 6} fill="#000" />;
      })}
      <rect x="0" y="147" width="12" height="1" fill="#000" />
      <rect x="0" y="372" width="12" height="1" fill="#000" />
      {labels(320).map((v) => (
        <text
          key={v}
          transform={`translate(10 ${11 + (v / 2) * TICK}) rotate(-90)`}
          textAnchor="middle"
          fontFamily="Liberation Sans, sans-serif"
          fontSize="10"
          fill="#222"
        >
          {v}
        </text>
      ))}
    </svg>
  </div>
);

const handles = [
  [41, 56],
  [324, 56],
  [608, 56],
  [41, 279],
  [608, 279],
  [41, 503],
  [324, 503],
  [608, 503],
];

const Page = () => (
  <div className="absolute top-[9px] left-[9px] h-[918px] w-[649px] bg-white shadow-[3px_3px_0_#000] outline -outline-offset-1 outline-black">
    <svg viewBox="0 0 649 918" className="absolute inset-0 h-full w-full" fill="none" aria-hidden="true">
      <rect x="31.500" y="31.500" width="587" height="856" stroke="#000" strokeDasharray="2 1.500" />
      <rect x="42" y="505" width="565" height="14" fill="#dcdcdc" />
      <rect x="46.500" y="522.500" width="556" height="16" stroke="#c4c4cc" />
      <rect x="46.500" y="539.500" width="274" height="144" stroke="#c4c4cc" />
      <rect x="328.500" y="539.500" width="274" height="144" stroke="#b9bb3a" />
      <path d="M40 504v184M608.500 504v184" stroke="#8d8d5a" strokeWidth="2" />
      <path d="M39 687.500h570" stroke="#4b4b3c" strokeWidth="2" />
      <path d="M0 504.500h649M0 688.500h649M.5 504v184M648.500 504v184" stroke="#b9bb2a" />
      <path d="M39.500 55v449M608.500 55v449" stroke="#8d8d5a" />
      <rect x="41" y="56" width="566" height="446" stroke="#000" strokeWidth="2" />
      <path d="M41 56l566 446M607 56L41 502" stroke="#000" strokeWidth="2" shapeRendering="crispEdges" />
      <rect x="611" y="504" width="37" height="21" fill="#000" />
      <rect x="615.500" y="508.500" width="27" height="11" stroke="#16403a" />
      {handles.map(([x, y]) => (
        <circle key={`${x}-${y}`} cx={x} cy={y} r="3" fill="#fff" stroke="#000" />
      ))}
    </svg>
    <span className="absolute top-[505px] left-[42px] w-[565px] text-center text-[11px] leading-[14px] text-[#444] [text-shadow:0_0_1px_#888]">
      Title
    </span>
    <span className="absolute top-[524px] left-[47px] text-[11px] leading-[14px] text-black [text-shadow:0_0_1px_#000]">
      TitleComponents
    </span>
    <span className="absolute top-[540px] left-[47px] text-[11px] leading-[13px] text-black">TextComponents</span>
    <span className="absolute top-[507px] left-[616px] text-[14px] leading-4 font-bold text-[#d8d8d8]">lc</span>
  </div>
);

const Canvas = () => (
  <main className="mt-[5px] mr-[5px] mb-1 ml-[6px] grid min-w-0 flex-1 grid-cols-[29px_minmax(0,1fr)] grid-rows-[29px_minmax(0,1fr)] overflow-hidden border-t border-l border-[#aca899] bg-[#c0c0c0]">
    <div className="flex items-center border-r border-b border-white bg-[#c0c0c0] pt-[7px] pb-0.5 pl-[7px]">
      <span className="h-5 flex-1 bg-[#f3f3f3] pl-0.5 text-[10px] leading-[13px] text-[#222]">mm</span>
    </div>
    <TopRuler />
    <SideRuler />
    <div className="relative overflow-hidden">
      <Page />
    </div>
  </main>
);

/* ---------- property panels ---------- */

const Field = ({
  id,
  label,
  value = "",
  disabled = false,
  width,
  tall = false,
}: {
  id: string;
  label: string;
  value?: string;
  disabled?: boolean;
  width: string;
  tall?: boolean;
}) => (
  <div className={`flex flex-col ${tall ? "mb-0.5" : ""}`}>
    <label
      htmlFor={id}
      className={`leading-[18px] ${tall ? "h-[17px]" : "h-[18px]"} ${disabled ? "text-[#aca899]" : "text-[#1b1020]"}`}
    >
      {label}
    </label>
    <input
      id={id}
      type="text"
      defaultValue={value}
      disabled={disabled}
      className={`border border-[#7f9db9] bg-white pl-0.5 text-[#222] outline-none ${width} ${tall ? "h-[26px]" : "h-[22px]"}`}
    />
  </div>
);

const Swatch = ({ id, label }: { id: string; label: string }) => (
  <div className="flex h-[26px] w-[115px] flex-none border border-[#5d6f86] bg-black">
    <span className="flex-1" />
    <button
      id={id}
      type="button"
      aria-label={label}
      className="flex w-[18px] items-center justify-center border border-t-white border-r-[#222] border-b-[#222] border-l-white bg-[#ece9d8]"
    >
      <svg viewBox="0 0 14 14" className="h-3.5 w-3.5" aria-hidden="true">
        <path d="M1 6q0-5 6-5t6 6q0 5-4 5t-3-3-3-1-2-2z" fill="#e5dd8c" stroke="#222" />
        <path d="M4 4h2M8 3.500h2M9.500 6.500h2M4 7h2" stroke="#222" strokeWidth="1.500" />
      </svg>
    </button>
  </div>
);

const Check = ({
  id,
  label,
  checked = false,
  disabled = false,
  row,
}: {
  id: string;
  label: string;
  checked?: boolean;
  disabled?: boolean;
  row: string;
}) => (
  <div className={`flex flex-none items-start ${row}`}>
    <span className="relative mr-1.5 flex-none">
      <input
        id={id}
        type="checkbox"
        defaultChecked={checked}
        disabled={disabled}
        className={`block h-[11px] w-[11px] appearance-none border-t-2 border-l-2 border-[#8b887b] ${disabled ? "bg-[#efecdf]" : "bg-white"}`}
      />
      {checked && (
        <svg viewBox="0 0 8 8" className="pointer-events-none absolute top-[3px] left-[3px] h-[7px] w-[7px]" aria-hidden="true">
          <path d="M0 3l3 3 4-5" stroke="#9b9884" strokeWidth="2" fill="none" />
        </svg>
      )}
    </span>
    <label htmlFor={id} className={`leading-[15px] ${disabled ? "text-[#b0ac9c]" : "text-[#1b1020]"}`}>
      {label}
    </label>
  </div>
);

const Properties = () => (
  <aside className="mt-0.5 flex w-[292px] flex-none flex-col overflow-hidden bg-[#faf8f5] text-[13px]">
    <PanelHead title="Position (mm)" />
    <div className="grid flex-none grid-cols-[60px_60px] content-start pt-1.5 pb-[58px] pl-1.5">
      <Field id="left" label="Left" value="13,2" width="w-[60px]" tall />
      <Field id="top" label="Top" value="18,2" width="w-[60px]" tall />
      <Field id="right" label="Right" value="196,7" width="w-[60px]" tall />
      <Field id="bottom" label="Bottom" value="162,7" width="w-[60px]" tall />
      <Field id="width" label="Width" value="183,5" width="w-[60px]" tall />
      <Field id="height" label="Height" value="144,5" width="w-[60px]" tall />
      <div className="mt-px">
        <Field id="rotation" label="Rotation" disabled width="w-[60px]" tall />
      </div>
    </div>

    <PanelHead title="Picture" />
    <div className="flex flex-none flex-col pr-[3px] pb-2.5 pl-1.5">
      <div className="flex items-center justify-between pt-0.5 pr-0.5 pl-px">
        <label htmlFor="bitmap" className="leading-5 text-[#1b1020]">
          Bitmap
        </label>
        <button
          type="button"
          aria-label="Pick bitmap"
          className="flex h-5 w-[19px] items-center justify-center border-r border-b border-[#8b887b] bg-[#d9d6c6]"
        >
          <svg viewBox="0 0 16 16" className="h-4 w-4" fill="none" stroke="#77745f" aria-hidden="true">
            <path d="M1 8l3-5 5 1 5-2M2 13l3-3M12 4l2 6" />
            <path d="M6 6l6 5-3 .5L10.500 15 9 15.500 7.500 12 6 13z" fill="#55523f" />
          </svg>
        </button>
      </div>
      <div className="ml-px flex h-[22px] border border-[#7f9db9] bg-white">
        <input id="bitmap" type="text" className="min-w-0 flex-1 bg-transparent outline-none" />
        <button type="button" aria-label="Browse" className="m-px flex w-[18px] items-end justify-center bg-[#ece9d8] pb-px leading-3 text-[#555]">
          ...
        </button>
      </div>
      <div className="mt-[5px]">
        <Field id="rw" label="Region width" value="0,0" width="w-28" />
      </div>
      <div className="mt-1">
        <Field id="rh" label="Region height" value="0,0" width="w-28" />
      </div>
      <label htmlFor="fill" className="mt-1.5 h-[19px] leading-[18px] text-[#1b1020]">
        Fill color
      </label>
      <Swatch id="fill" label="Choose fill color" />
      <fieldset className="mt-4 ml-px h-[74px] w-[87px] border border-[#aca899] pl-[6px]">
        <legend className="px-px leading-4 text-[#1b1020]">Alignment</legend>
        <div className="grid w-[51px] grid-cols-3 gap-y-1.5 pt-[3px]">
          {Array.from({ length: 9 }, (_, i) => (
            <span key={i} className="relative flex h-[11px] w-[11px]">
              <input
                type="radio"
                name="alignment"
                aria-label={`Alignment ${i + 1}`}
                defaultChecked={i === 4}
                className="h-[11px] w-[11px] appearance-none rounded-full border border-t-[#77746a] border-r-transparent border-b-transparent border-l-[#77746a] bg-white"
              />
              {i === 4 && <span className="pointer-events-none absolute top-1 left-1 h-1 w-1 rounded-full bg-black" />}
            </span>
          ))}
        </div>
      </fieldset>
    </div>

    <PanelHead title="Font" flat />
    <div className="flex flex-none flex-col pt-2 pb-2 pl-[9px]">
      <label htmlFor="fontname" className="h-[19px] leading-[19px] text-[#aca899]">
        Fontname
      </label>
      <Select id="fontname" value="" disabled className="h-[26px] w-[269px] border border-[#c9c7ba]" />
      <label htmlFor="fontcolor" className="h-[19px] leading-[19px] text-[#aca899]">
        Fontcolor
      </label>
      <Swatch id="fontcolor" label="Choose font color" />
      <span className="mt-[3px] h-[18px] leading-[18px] text-[#aca899]">Fontheight</span>
      <div className="mt-px flex gap-2.5">
        <Field id="mm" label="mm" disabled width="w-[47px]" />
        <Field id="points" label="Points" disabled width="w-[45px]" />
      </div>
    </div>

    <PanelHead title="Data source" />
    <div className="flex flex-none flex-col pt-[5px] pr-[3px] pb-[3px] pl-[7px]">
      <Check id="c1" label="Fixed" checked disabled row="h-[15px]" />
      <Check id="c2" label="Form data" disabled row="h-[15px]" />
      <Check id="c3" label="Document data" disabled row="h-[15px]" />
      <Check id="c4" label="Text block" disabled row="h-[15px]" />
      <Check id="c5" label="Data source" disabled row="h-[19px]" />
      <Check id="c6" label="Update form data" checked disabled row="h-[17px]" />
      <Check id="c7" label="Update document data" checked disabled row="h-[17px]" />
      <label htmlFor="language" className="h-[17px] leading-[17px] text-[#1b1020]">
        Language level
      </label>
      <Select id="language" value="No language (Picture only)" className="h-[26px] w-full border border-[#7f9db9]" />
    </div>

    <PanelHead title="Picture production" />
    <div className="flex h-20 flex-none flex-col overflow-hidden pt-3 pl-[7px]">
      <Check id="fw" label="Fix Width" row="h-[21px]" />
      <Check id="fh" label="FixHeight" row="h-[18px]" />
      <label htmlFor="structure" className="h-[19px] flex-none leading-[19px] text-[#1b1020]">
        Structure level
      </label>
      <Select id="structure" value="" className="h-[26px] w-[126px] border border-[#7f9db9]" />
    </div>

    <PanelHead title="Text details" flat />
    <PanelHead title="Text attributes" flat />
  </aside>
);

export default function App() {
  return (
    <div className="flex h-screen flex-col overflow-hidden bg-[#ece9d8] font-['Liberation_Sans',Arial,sans-serif] text-black">
      <TopBars />
      <div className="flex min-h-0 flex-1 border-t border-[#fbfaf5]">
        <SideBar
          label="Insert"
          className="w-[33px]"
          inner="pt-0.5"
          groups={[
            ["Text element"],
            ["Rectangle", "Rounded rectangle", "Ellipse"],
            ["Picture", "Picture run"],
            ["Line"],
            ["Add container", "Add table", "Structure", "Add columns"],
          ]}
        />
        <aside className="mt-0.5 mb-1 ml-0.5 flex w-[318px] flex-none flex-col gap-1">
          <section className="flex h-[395px] flex-none flex-col">
            <PanelHead title="Document stream" stack />
            <div className="flex min-h-0 flex-1 bg-white pr-0.5 pl-px">
              <Tree rows={documentRows} label="Document stream" />
              <VScroll thumb="h-[143px]" />
            </div>
          </section>
          <section className="flex h-[285px] flex-none flex-col">
            <PanelHead title="Template elements" stack />
            <div className="flex min-h-0 flex-1 flex-col bg-white px-px">
              <Tree rows={elementRows} label="Template elements" className="pt-px" />
              <div className="flex h-[18px] flex-none items-center bg-[#fbfaf6] pr-0.5 pl-px">
                <button type="button" aria-label="Scroll left" className={scrollBtn}>
                  <Chevron dir="left" />
                </button>
                <div className="ml-0.5 flex h-4 w-[264px] items-center justify-center gap-px rounded-[2px] border border-[#a5bdf2] bg-linear-to-b from-[#cfdcfd] to-[#b8cdfb]">
                  {[0, 1, 2, 3].map((i) => (
                    <span key={i} className="h-1.5 w-px bg-[#8fa9e3]" />
                  ))}
                </div>
                <button type="button" aria-label="Scroll right" className={`ml-auto ${scrollBtn}`}>
                  <Chevron dir="right" />
                </button>
              </div>
            </div>
          </section>
          <section className="flex min-h-0 flex-1 flex-col">
            <PanelHead title="Template preview" />
            <div className="flex min-h-0 flex-1 bg-white pr-0.5 pl-px">
              <Preview />
            </div>
          </section>
        </aside>
        <Canvas />
        <Properties />
        <SideBar
          label="Pages"
          className="ml-px w-[33px]"
          inner="pt-1"
          groups={[
            ["Add page", "Insert page break", "Delete page", "Page info"],
            ["First page", "Previous page", "Next page", "Last page"],
          ]}
        />
      </div>
    </div>
  );
}
